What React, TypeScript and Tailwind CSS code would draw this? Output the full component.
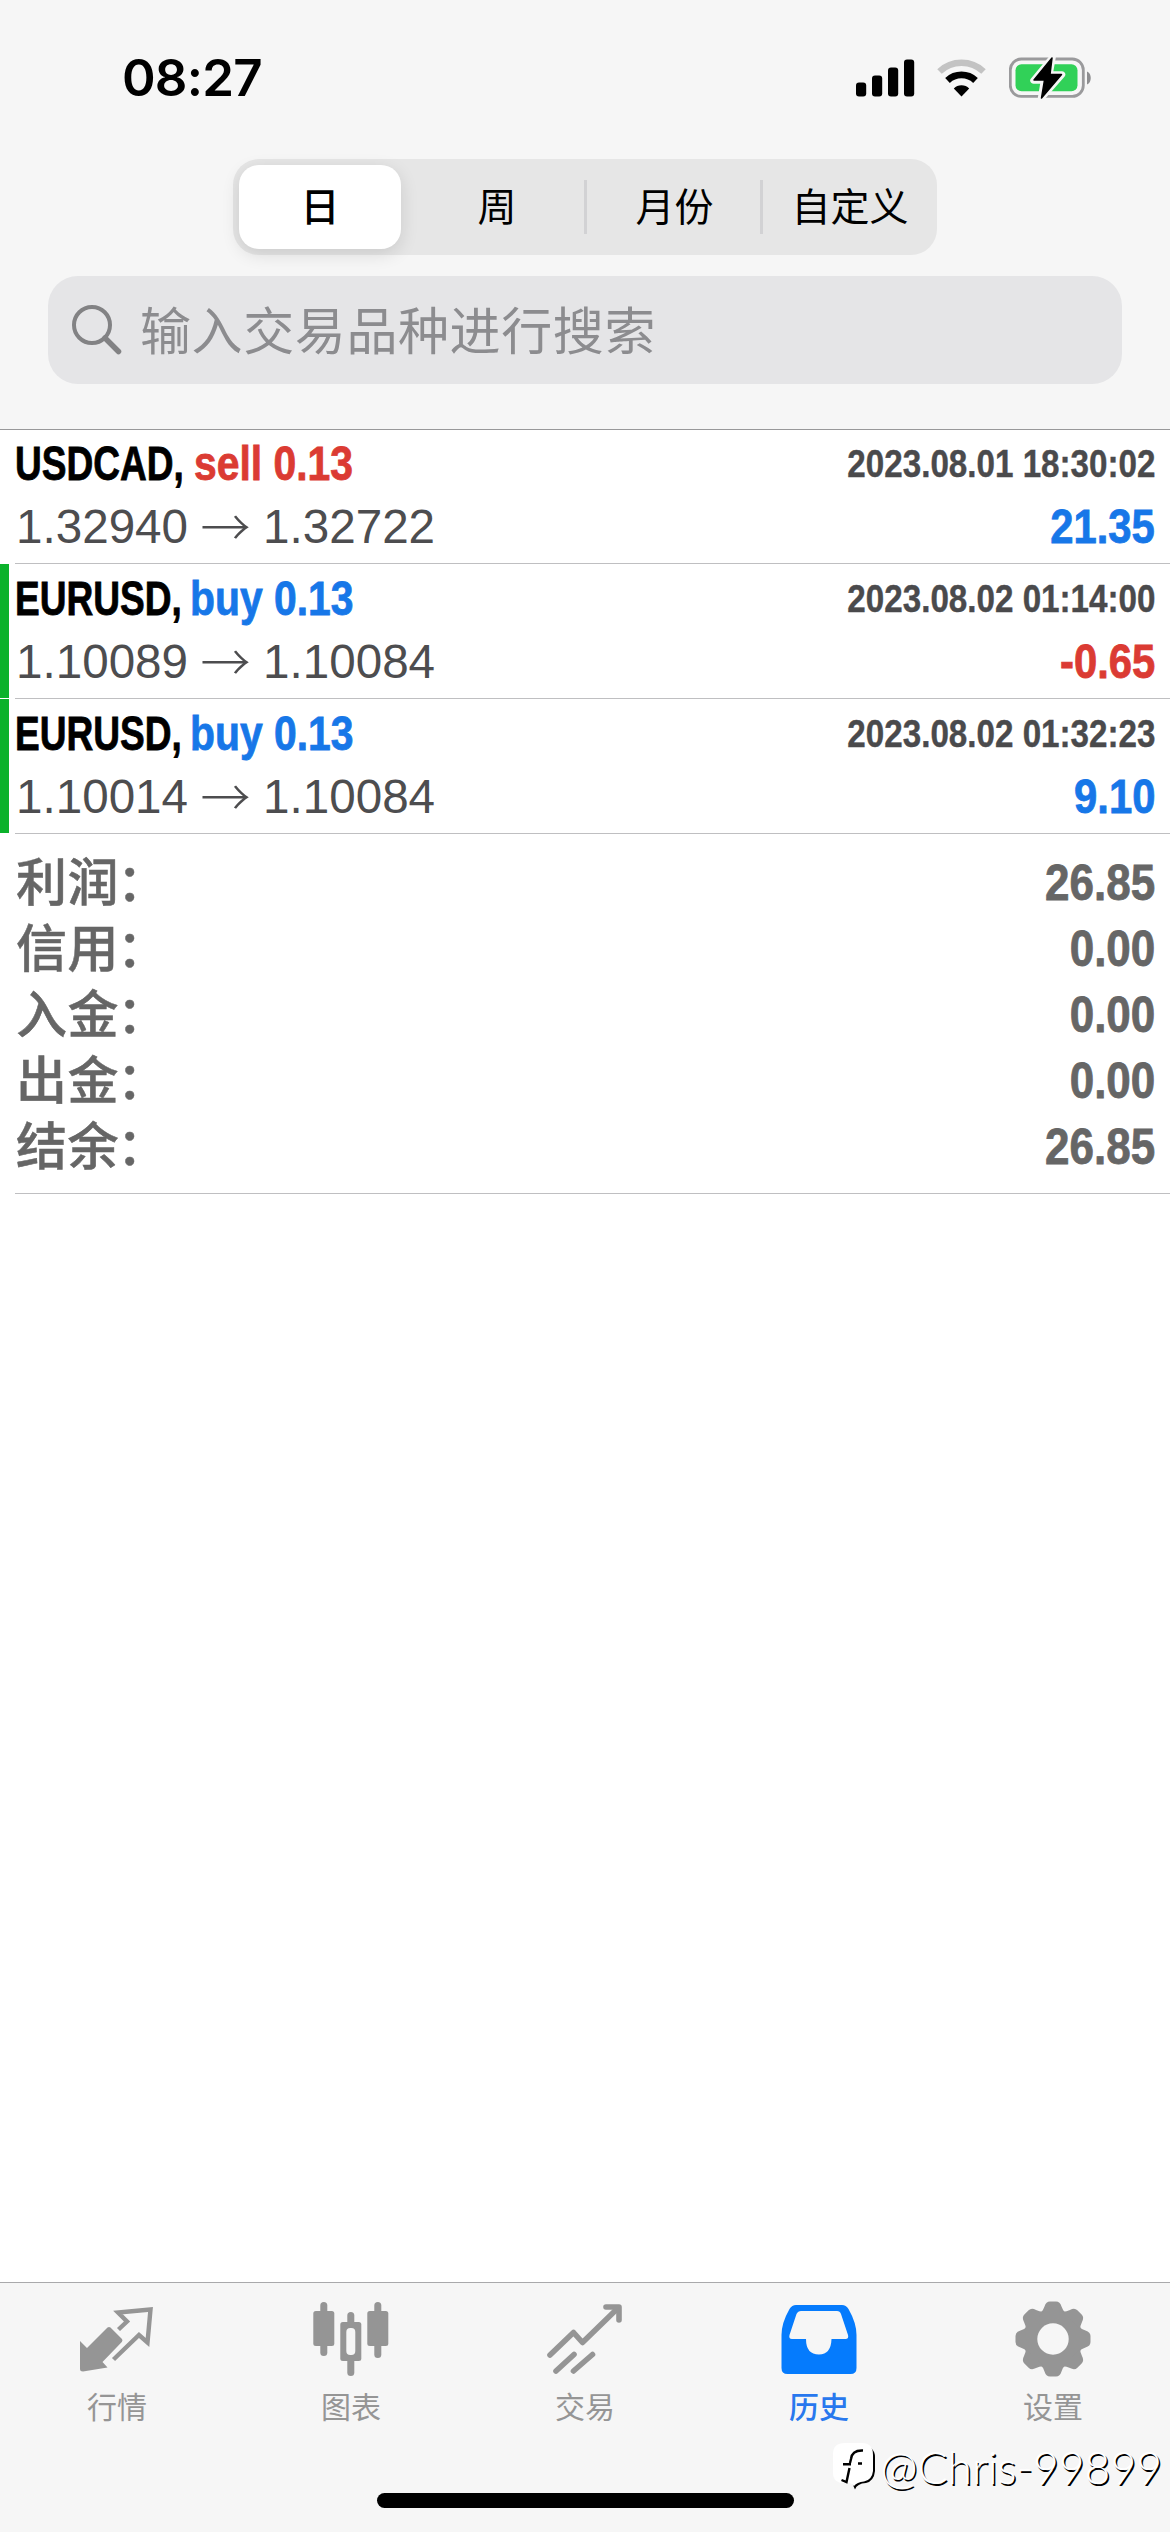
import React from "react";

const cjk = "font-['Inter','Noto_Sans_CJK_SC',sans-serif]";
const arial = "font-['Liberation_Sans',Arial,sans-serif]";
const heavy = "[-webkit-text-stroke:0.8px_currentColor]";

type Deal = {
  symbol: string;
  side: "sell" | "buy";
  volume: string;
  open: string;
  close: string;
  time: string;
  profit: string;
  marked: boolean;
};

const deals: Deal[] = [
  { symbol: "USDCAD,", side: "sell", volume: "0.13", open: "1.32940", close: "1.32722", time: "2023.08.01 18:30:02", profit: "21.35", marked: false },
  { symbol: "EURUSD,", side: "buy", volume: "0.13", open: "1.10089", close: "1.10084", time: "2023.08.02 01:14:00", profit: "-0.65", marked: true },
  { symbol: "EURUSD,", side: "buy", volume: "0.13", open: "1.10014", close: "1.10084", time: "2023.08.02 01:32:23", profit: "9.10", marked: true },
];

const totals = [
  ["利润", "26.85"],
  ["信用", "0.00"],
  ["入金", "0.00"],
  ["出金", "0.00"],
  ["结余", "26.85"],
];

function StatusBar() {
  return (
    <div className="flex h-[159px] items-start justify-between pl-[122px] pr-[77px]">
      <span className="mt-[47px] text-[51px] leading-[62px] font-semibold tracking-[-0.8px] text-black font-['Inter',sans-serif]">08:27</span>
      <div className="mt-[57px] flex h-[42px] items-center">
        <svg width="60" height="38" viewBox="0 0 60 38" className="mr-5">
          <rect x="0" y="23.5" width="10.2" height="14" rx="3" />
          <rect x="16" y="16.5" width="10.2" height="21" rx="3" />
          <rect x="32" y="8.500" width="10.2" height="29" rx="3" />
          <rect x="48" y="0.5" width="10.2" height="37" rx="3" />
        </svg>
        <svg width="52" height="38" viewBox="0 0 52 38" fill="none" className="mr-[21px]">
          <path d="M3.5 12.5 A32 32 0 0 1 47.5 12.5" stroke="#c3c3c3" strokeWidth="6.5" />
          <path d="M11.5 21.5 A20.5 20.5 0 0 1 39.5 21.5" stroke="#000" strokeWidth="6.8" />
          <path d="M25.5 37.5 L17.8 29.5 A11 11 0 0 1 33.2 29.5 Z" fill="#000" />
        </svg>
        <svg width="84" height="44" viewBox="0 0 84 44">
          <rect x="1.3" y="3" width="73" height="37.4" rx="11" fill="none" stroke="#9a9a9c" strokeWidth="2.8" />
          <rect x="6.5" y="8.2" width="62" height="27" rx="6" fill="#31d158" />
          <path d="M78 15.500 C83 17.500 83 26.500 78 28.500 Z" fill="#8e8e90" />
          <path d="M43.500 1.500 L24.500 24.500 H35 L32 42.500 L53 18.500 H40.500 Z" fill="#000" stroke="#f6f6f6" strokeWidth="6.500" strokeLinejoin="round" />
          <path d="M43 2 L25 24 H35.500 L32.500 42 L52.500 18.500 H41 Z" fill="#000" stroke="#000" strokeWidth="1.5" strokeLinejoin="round" />
        </svg>
      </div>
    </div>
  );
}

function Segments() {
  return (
    <div className="mx-auto flex h-24 w-[704px] items-center rounded-[26px] bg-[#e6e6e6] text-[39px] text-black">
      <div className="flex h-24 w-44 items-center justify-center">
        <div className="mr-[2px] flex h-[84px] w-[162px] items-center justify-center rounded-[20px] bg-white font-medium shadow-[0_5px_18px_rgba(0,0,0,0.12)]">
          日
        </div>
      </div>
      <div className="flex w-44 justify-center">周</div>
      <div className="-mx-[1.5px] h-[54px] w-[3px] bg-[#d2d2d4]" />
      <div className="flex w-44 justify-center pl-[3px]">月份</div>
      <div className="-mx-[1.5px] h-[54px] w-[3px] bg-[#d2d2d4]" />
      <div className="flex w-44 justify-center pl-[2px]">自定义</div>
    </div>
  );
}

function SearchField() {
  return (
    <div className="mx-12 mt-[21px] flex h-[108px] items-center rounded-[30px] bg-[#e5e5e7] pl-6">
      <svg width="51" height="51" viewBox="0 0 51 51" fill="none" stroke="#828284" className="shrink-0">
        <circle cx="20" cy="20" r="18" strokeWidth="4" />
        <path d="M33 33 L46.5 46.5" strokeWidth="5.5" strokeLinecap="round" />
      </svg>
      <span className="mt-[2px] ml-[17px] text-[51px] leading-none tracking-[0.6px] text-[#8c8c8f]">输入交易品种进行搜索</span>
    </div>
  );
}

function DealRow({ deal }: { deal: Deal }) {
  const sideColor = deal.side === "buy" ? "text-[#1777e8]" : "text-[#db3b33]";
  const profitColor = deal.profit.startsWith("-") ? "text-[#db3b33]" : "text-[#1777e8]";
  return (
    <div className={`flex h-[135px] ${arial}`}>
      <div className={deal.marked ? "h-[134px] w-[9px] bg-[#0bb22b]" : "w-[9px]"} />
      <div className="ml-[6px] flex grow flex-col border-b border-[#bfbfc1] pr-[15px]">
        <div className="flex h-[71px] items-start justify-between pt-2 font-bold whitespace-nowrap">
          <div className={`flex text-[47.5px] leading-[54px] ${heavy}`}>
            <span className={deal.side === "buy" ? "w-[175px]" : "w-[179px]"}>
              <span className="inline-block origin-left scale-x-[0.78] text-black">{deal.symbol}</span>
            </span>
            <span className={`inline-block origin-left scale-x-[0.86] ${sideColor}`}>
              {deal.side} {deal.volume}
            </span>
          </div>
          <span className="inline-block origin-right scale-x-[0.862] text-[38.5px] leading-[54px] text-[#4a4a4c] [-webkit-text-stroke:0.4px_currentColor]">{deal.time}</span>
        </div>
        <div className="flex items-start justify-between">
          <div className="flex pl-px text-[47.6px] leading-[54px] text-[#4d4d4f]">
            <span>{deal.open}</span>
            <span className="-mt-[3px] flex w-[75px] justify-center font-['Noto_Sans_CJK_SC',sans-serif] text-[50px] font-light">→</span>
            <span>{deal.close}</span>
          </div>
          <span className={`inline-block origin-right scale-x-[0.88] text-[47.5px] leading-[54px] font-bold ${heavy} ${profitColor}`}>{deal.profit}</span>
        </div>
      </div>
    </div>
  );
}

function Totals() {
  return (
    <div className="ml-[15px] flex h-[360px] flex-col border-b border-[#bfbfc1] pt-4 pr-[15px] text-[#666]">
      {totals.map(([label, value]) => (
        <div key={label} className="flex h-[66px] items-center justify-between">
          <span className="pl-px text-[51px] leading-[66px] font-medium tracking-[0.5px] [-webkit-text-stroke:0.5px_currentColor]">
            {label}
            <span className="-ml-[2px]">：</span>
          </span>
          <span className={`inline-block origin-right scale-x-[0.88] text-[50px] leading-[66px] font-bold ${heavy} ${arial}`}>{value}</span>
        </div>
      ))}
    </div>
  );
}

const icons: Record<string, React.ReactNode> = {
  行情: (
    <svg width="76" height="76" viewBox="0 0 76 76" fill="none">
      <path d="M1 40 L8 47 L28.5 26.5 Q30 25.3 31.500 26.5 L43 38 Q44 39.5 42.8 41 L23.5 61 L28.5 66.500 L4 70.5 Q1 70.5 1 68 Z" fill="#959595" />
      <path d="M39.5 28.5 L48 20.5 L39 11.5 L71.5 8.5 L68.5 41.5 L60 34 L34.5 58.5" stroke="#959595" strokeWidth="4.4" />
    </svg>
  ),
  图表: (
    <svg width="76" height="76" viewBox="0 0 76 76" fill="#959595">
      <rect x="7.3" y="1" width="7" height="54" rx="3.5" />
      <rect x="0.3" y="10" width="21" height="35" rx="2.5" />
      <rect x="34.3" y="11" width="7" height="64" rx="3.5" />
      <rect x="27.3" y="21" width="21" height="39" rx="2.5" />
      <rect x="33.3" y="27" width="9" height="27" rx="4" fill="#f6f6f6" />
      <rect x="61.3" y="1" width="7" height="56" rx="3.5" />
      <rect x="54.3" y="10" width="21" height="35" rx="2.5" />
    </svg>
  ),
  交易: (
    <svg width="76" height="76" viewBox="0 0 76 76" fill="none" stroke="#959595" strokeWidth="5.6" strokeLinecap="round" strokeLinejoin="round">
      <path d="M3 54 L26.5 31.5 L35.5 41.5 L71 7" />
      <path d="M59 6 H72 V19" />
      <path d="M9 70 L27 53.5 M26.5 70 L45.5 53.5" />
    </svg>
  ),
  历史: (
    <svg width="76" height="76" viewBox="0 0 76 76">
      <path fillRule="evenodd" fill="#057bfd" d="M15 4 H61 Q65 4 67.5 8 Q75.5 22 75.5 34 V67 Q75.5 73 69.5 73 H6.5 Q0.5 73 0.5 67 V34 Q0.5 22 8.500 8 Q11 4 15 4 Z M20 10 Q17 10 15.500 13 L8.500 34 Q7.500 38 11 38 H25 Q25 53.5 38 53.500 Q50 53.5 50.5 38 H64.5 Q68 38 67 34 L60 13 Q59 10 56 10 Z" />
    </svg>
  ),
  设置: (
    <svg width="76" height="76" viewBox="-38 -38 76 76">
      <g fill="#959595">
        <circle r="29.5" />
        {[0, 45, 90, 135, 180, 225, 270, 315].map((a) => (
          <path key={a} transform={`rotate(${a})`} d="M-12.500 -26 Q-10 -28 -8.500 -32.500 Q-7 -37.500 -3 -37.500 H3 Q7 -37.500 8.500 -32.500 Q10 -28 12.500 -26 Z" />
        ))}
      </g>
      <circle r="15.700" fill="#f6f6f6" />
    </svg>
  ),
};

function TabBar() {
  return (
    <nav className="relative flex h-[250px] flex-col border-t border-[#a9a9ab] bg-[#f6f6f6]">
      <div className="flex pt-[18px]">
        {["行情", "图表", "交易", "历史", "设置"].map((name) => (
          <div key={name} className="flex w-[234px] flex-col items-center">
            {icons[name]}
            <span className={`mt-2 text-[30px] leading-[44px] ${name === "历史" ? "font-medium text-[#2878ee]" : "text-[#959595]"}`}>{name}</span>
          </div>
        ))}
      </div>
      <div className="mx-auto mt-auto mb-6 h-[15px] w-[417px] rounded-full bg-black" />
      <div className="absolute right-[8px] bottom-[37px] flex items-center">
        <svg width="44" height="50" viewBox="0 0 44 50">
          <path d="M30 3 Q42 5 42 15 V29 Q41 39 33 41 Q24 41.500 22 47.500 L19.500 42 L30 36 Z" fill="#000" />
          <path d="M12 1 H29 Q40 1 40 13 V29 Q39 38 31 39.500 Q24 40 21 44 L17 41 H11 Q0 41 0 31 V12 Q0 1 12 1 Z" fill="#fff" />
          <path d="M30 8.500 Q19 8 18 17 L17 21 M16.500 26 L13.500 40 L8.500 38 M10 22.300 H18 M25 21.500 H29" fill="none" stroke="#000" strokeWidth="2.4" />
        </svg>
        <span className="ml-[4px] text-[44.500px] leading-[56px] font-light whitespace-nowrap text-white [text-shadow:1.5px_1.5px_0.5px_#000] font-['Lato',sans-serif]">@Chris-99899</span>
      </div>
    </nav>
  );
}

export default function App() {
  return (
    <div className={`flex h-[2532px] w-[1170px] flex-col overflow-hidden bg-white ${cjk}`}>
      <header className="h-[430px] shrink-0 border-b border-[#98989a] bg-[#f6f6f6]">
        <StatusBar />
        <Segments />
        <SearchField />
      </header>
      <main className="-mt-px grow">
        {deals.map((deal) => (
          <DealRow key={deal.time} deal={deal} />
        ))}
        <Totals />
      </main>
      <TabBar />
    </div>
  );
}
